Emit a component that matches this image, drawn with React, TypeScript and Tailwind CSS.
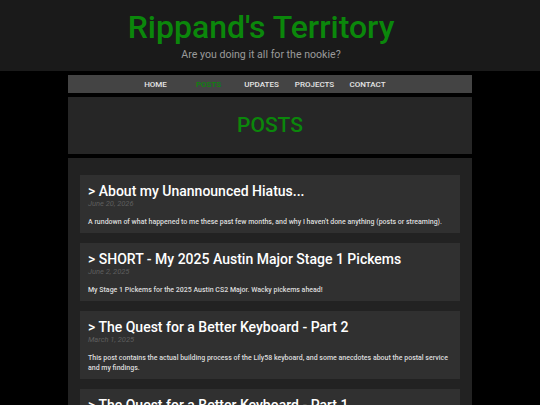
const posts = [
  {
    title: "> About my Unannounced Hiatus...",
    date: "June 20, 2026",
    desc: "A rundown of what happened to me these past few months, and why I haven't done anything (posts or streaming).",
  },
  {
    title: "> SHORT - My 2025 Austin Major Stage 1 Pickems",
    date: "June 2, 2025",
    desc: "My Stage 1 Pickems for the 2025 Austin CS2 Major. Wacky pickems ahead!",
  },
  {
    title: "> The Quest for a Better Keyboard - Part 2",
    date: "March 1, 2025",
    desc: "This post contains the actual building process of the Lily58 keyboard, and some anecdotes about the postal service and my findings.",
  },
  {
    title: "> The Quest for a Better Keyboard - Part 1",
    date: "February 9, 2025",
    desc: "The start of my search for a split keyboard, and why I wanted one in the first place.",
  },
];

const navItems = ["HOME", "POSTS", "UPDATES", "PROJECTS", "CONTACT"];

export default function App() {
  return (
    <div
      className="min-h-[405px] bg-black pb-6"
      style={{ fontFamily: "Roboto, 'Noto Sans', sans-serif" }}
    >
      {/* Header */}
      <header className="flex h-[71px] flex-col items-center bg-[#1a1a1a] pt-[7px] pr-[18px]">
        <h1 className="text-[32px] leading-[40px] font-medium text-[#0b870b]">
          Rippand's Territory
        </h1>
        <p className="mt-[1px] text-[10.6px] leading-[14px] text-[#9a9a9a]">
          Are you doing it all for the nookie?
        </p>
      </header>

      <div className="mx-auto w-[404px]">
        {/* Nav */}
        <nav className="mt-[4px] flex h-[18px] items-center justify-center gap-[3px] bg-[#444444] pt-[1px] pr-[17px]">
          {navItems.map((item) => (
            <a
              key={item}
              className={`w-[50px] text-center text-[8px] font-medium ${
                item === "POSTS" ? "text-[#0b870b]" : "text-[#e6e6e6]"
              }`}
            >
              {item}
            </a>
          ))}
        </nav>

        {/* Page heading */}
        <div className="mt-[4px] flex h-[57px] items-center justify-center bg-[#262626] pt-[1px]">
          <h2 className="text-[21px] font-medium text-[#0b870b]">POSTS</h2>
        </div>

        {/* Post list */}
        <main className="mt-[4px] flex flex-col gap-[10px] bg-[#222222] px-[12px] pt-[17px] pb-[12px]">
          {posts.map((post) => (
            <article
              key={post.title}
              className="bg-[#303030] px-[8px] pt-[8px] pb-[6px]"
            >
              <h3 className="text-[14px] leading-[16px] font-medium text-white">
                {post.title}
              </h3>
              <p className="text-[7.5px] leading-[10px] text-[#5e5e5e] italic">
                {post.date}
              </p>
              <p className="mt-[8px] text-[7px] leading-[10px] font-medium text-[#dddddd]">
                {post.desc}
              </p>
            </article>
          ))}
        </main>
      </div>
    </div>
  );
}
